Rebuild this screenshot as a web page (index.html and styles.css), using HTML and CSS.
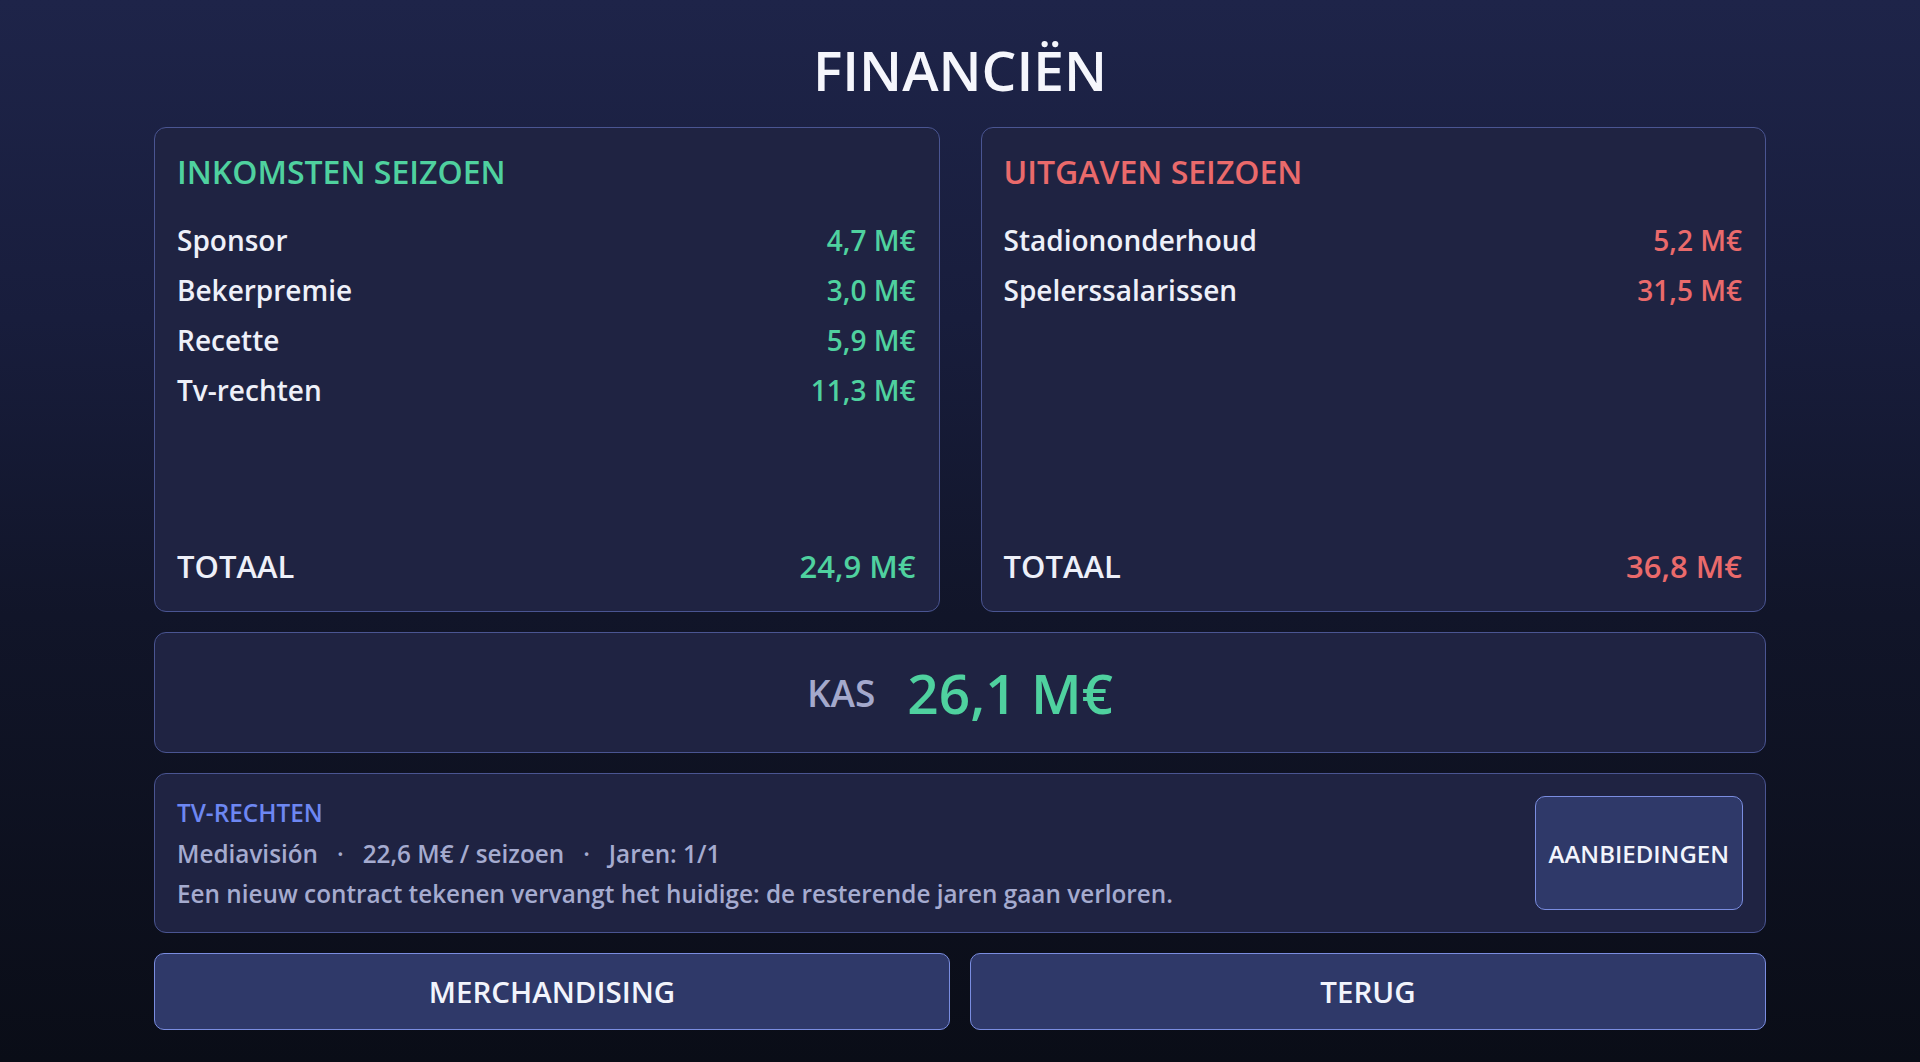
FILE: index.html
```html
<!DOCTYPE html>
<html lang="nl">
<head>
    <meta charset="UTF-8">
    <meta name="viewport" content="width=device-width, initial-scale=1.0">
    <title>Financiën</title>
    <link rel="stylesheet" href="styles.css">
</head>
<body>
    <div class="finance-screen">
        <h1 class="screen-title">FINANCIËN</h1>

        <div class="season-grid">
            <section class="panel ledger">
                <h2 class="ledger-title income">INKOMSTEN SEIZOEN</h2>
                <ul class="ledger-rows">
                    <li><span>Sponsor</span><span class="amount income">4,7 M€</span></li>
                    <li><span>Bekerpremie</span><span class="amount income">3,0 M€</span></li>
                    <li><span>Recette</span><span class="amount income">5,9 M€</span></li>
                    <li><span>Tv-rechten</span><span class="amount income">11,3 M€</span></li>
                </ul>
                <div class="ledger-total">
                    <span>TOTAAL</span><span class="amount income">24,9 M€</span>
                </div>
            </section>

            <section class="panel ledger">
                <h2 class="ledger-title expense">UITGAVEN SEIZOEN</h2>
                <ul class="ledger-rows">
                    <li><span>Stadiononderhoud</span><span class="amount expense">5,2 M€</span></li>
                    <li><span>Spelerssalarissen</span><span class="amount expense">31,5 M€</span></li>
                </ul>
                <div class="ledger-total">
                    <span>TOTAAL</span><span class="amount expense">36,8 M€</span>
                </div>
            </section>
        </div>

        <section class="panel cash">
            <span class="cash-label">KAS</span>
            <span class="cash-value">26,1 M€</span>
        </section>

        <section class="panel tv-deal">
            <div class="tv-info">
                <div class="tv-label">TV-RECHTEN</div>
                <div class="tv-meta">
                    <span>Mediavisión</span>
                    <span class="dot">·</span>
                    <span>22,6 M€ / seizoen</span>
                    <span class="dot">·</span>
                    <span>Jaren: 1/1</span>
                </div>
                <div class="tv-note">Een nieuw contract tekenen vervangt het huidige: de resterende jaren gaan verloren.</div>
            </div>
            <button class="btn btn-offers">AANBIEDINGEN</button>
        </section>

        <div class="action-bar">
            <button class="btn btn-wide">MERCHANDISING</button>
            <button class="btn btn-wide">TERUG</button>
        </div>
    </div>
</body>
</html>
```

FILE: styles.css
```css
* {
    margin: 0;
    padding: 0;
    box-sizing: border-box;
}

html, body {
    height: 100%;
}

body {
    font-family: 'Open Sans', 'Noto Sans', sans-serif;
    font-weight: 600;
    color: #eef0f9;
    background: linear-gradient(180deg, #1e2449 0%, #181d3c 30%, #111529 58%, #0a0d17 100%);
    overflow: hidden;
}

.finance-screen {
    width: 1612px;
    height: 100%;
    margin: 0 auto;
    padding: 32px 0 32px;
    display: flex;
    flex-direction: column;
    gap: 20px;
}

.screen-title {
    font-size: 55px;
    font-weight: 600;
    text-align: center;
    color: #f5f6fc;
    line-height: normal;
}

.panel {
    background: #1f2342;
    border: 1px solid #4a5592;
    border-radius: 12px;
}

/* seasonal income / expenses */
.season-grid {
    flex: 1;
    display: grid;
    grid-template-columns: 1fr 1fr;
    gap: 41px;
}

.ledger {
    padding: 22px 23px 24px 22px;
    display: flex;
    flex-direction: column;
}

.ledger-title {
    font-size: 32px;
    font-weight: 600;
    line-height: normal;
}

.ledger-rows {
    list-style: none;
    margin-top: 28px;
    display: flex;
    flex-direction: column;
    gap: 12px;
}

.ledger-rows li {
    display: flex;
    justify-content: space-between;
    font-size: 28px;
    line-height: normal;
}

.ledger-total {
    margin-top: auto;
    display: flex;
    justify-content: space-between;
    font-size: 31px;
    line-height: normal;
}

.income { color: #4fd19f; }
.expense { color: #ea6a6b; }

/* cash on hand */
.cash {
    padding: 22px;
    display: flex;
    align-items: center;
    justify-content: center;
    gap: 32px;
}

.cash-label {
    font-size: 37px;
    color: #a4a9cc;
}

.cash-value {
    font-size: 55px;
    line-height: normal;
    color: #4fd19f;
}

/* tv contract */
.tv-deal {
    padding: 22px;
    display: flex;
    justify-content: space-between;
    gap: 24px;
}

.tv-info {
    display: flex;
    flex-direction: column;
    gap: 7.5px;
    font-size: 24.3px;
    line-height: normal;
    color: #a5abcf;
}

.tv-label {
    color: #6d87f2;
}

.tv-meta {
    display: flex;
    gap: 19px;
}

.btn {
    font-family: inherit;
    font-weight: 600;
    color: #f2f4fc;
    background: #2f3969;
    border: 1px solid #7a8de0;
    border-radius: 10px;
    cursor: pointer;
}

.btn-offers {
    font-size: 24px;
    padding: 0 13px;
}

.action-bar {
    display: grid;
    grid-template-columns: 1fr 1fr;
    gap: 20px;
}

.btn-wide {
    font-size: 29.5px;
    line-height: normal;
    padding: 17px;
}
```
